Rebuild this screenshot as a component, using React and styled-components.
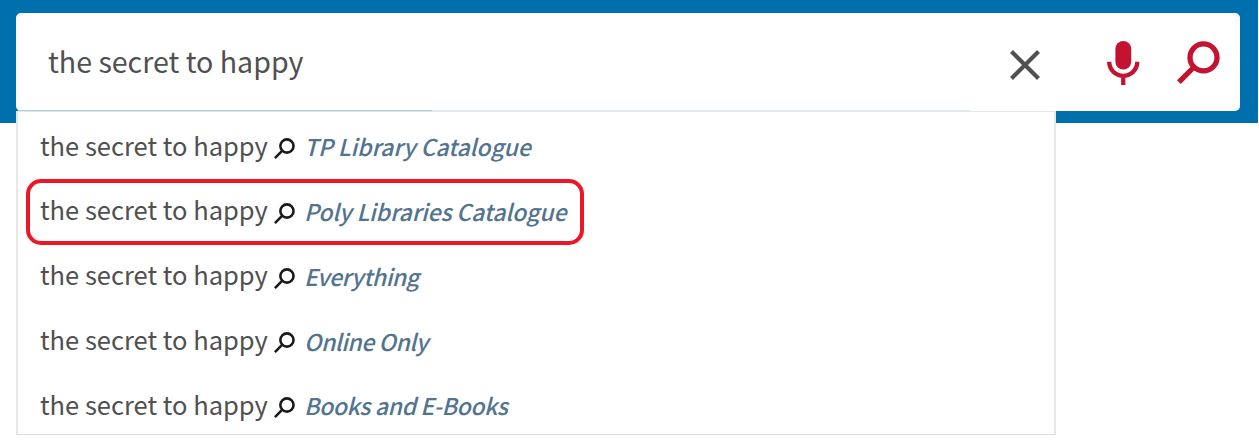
import React from "react";
import styled, { createGlobalStyle } from "styled-components";

const Global = createGlobalStyle`
  * { box-sizing: border-box; }
  body { margin: 0; background: #fff; font-family: "Noto Sans CJK SC", "Noto Sans", sans-serif; color: #505050; }
`;

const Page = styled.main`
  position: relative;
  width: 1259px;
  height: 448px;
  overflow: hidden;
`;

const Banner = styled.header`
  width: 1258px;
  height: 123px;
  padding: 13px 18px 12px 16px;
  background: #006fae;
`;

const SearchBar = styled.div`
  display: flex;
  align-items: center;
  height: 98px;
  padding: 0 20px 0 32px;
  background: #fff;
  border-radius: 5px;
`;

const Query = styled.span`
  flex: 1;
  padding-bottom: 3px;
  font-size: 28.6px;
  line-height: 40px;
  white-space: nowrap;
`;

const IconButton = styled.button`
  display: flex;
  margin: 0 0 0 ${(p) => p.$gap}px;
  padding: ${(p) => p.$drop || 0}px 0 0;
  border: 0;
  background: none;
  color: ${(p) => p.$color};
`;

const Suggestions = styled.ul`
  position: absolute;
  top: 111px;
  left: 16px;
  width: 1040px;
  height: 324px;
  margin: 0;
  padding: 3px 8px 0;
  list-style: none;
  background: #fff;
  border: solid #e7e7e7;
  border-width: 1px 2px;
  border-bottom-color: #dedede;
  box-shadow: 0 3px 4px rgba(0, 0, 0, 0.015);

  &::before {
    content: "";
    position: absolute;
    top: -2px;
    left: 0;
    width: 952px;
    height: 1px;
    background: linear-gradient(to right, #a9cde0 414px, #d9e9f2 414px);
  }
`;

const Row = styled.li`
  position: relative;
  display: flex;
  align-items: center;
  height: 64.75px;
  padding-left: 14px;
`;

const Highlight = styled.span`
  position: absolute;
  top: -1px;
  left: 0;
  width: 558px;
  height: 66px;
  border: 4px solid #ec1627;
  border-radius: 15px;
`;

const Term = styled.span`
  width: 233.5px;
  padding-bottom: 5.6px;
  font-size: 25.5px;
  line-height: 36px;
  white-space: nowrap;
`;

const ScopeIcon = styled.span`
  display: flex;
  padding-top: 2.6px;
  color: #1a1a1a;
`;

const Scope = styled.em`
  margin-left: 9.5px;
  padding-bottom: 2px;
  font-size: 23px;
  line-height: 34px;
  font-weight: 500;
  letter-spacing: ${(p) => p.$tracking}px;
  color: #53748f;
  white-space: nowrap;
`;

const Glass = ({ size, stroke = 5.3 }) => (
  <svg width={size} height={size} viewBox="0 0 43 43" fill="none" stroke="currentColor" strokeWidth={stroke}>
    <circle cx="26.5" cy="16.4" r="13.5" />
    <path d="M17 26 1.9 41.1" />
  </svg>
);

const Cross = () => (
  <svg width="30" height="30" viewBox="0 0 30 30" fill="none" stroke="currentColor" strokeWidth="4.2">
    <path d="M1.5 1.5 28.5 28.5M28.5 1.5 1.5 28.5" />
  </svg>
);

const Mic = () => (
  <svg width="33" height="44" viewBox="0 0 33 44">
    <rect x="8.4" y="0" width="15.8" height="28.6" rx="7.9" fill="currentColor" />
    <path d="M2.2 20.8a14.05 14.05 0 0 0 28.1 0M16.25 34.8V44" fill="none" stroke="currentColor" strokeWidth="4.3" />
  </svg>
);

const scopes = [
  { label: "TP Library Catalogue", tracking: -0.1 },
  { label: "Poly Libraries Catalogue", tracking: -0.12, highlighted: true },
  { label: "Everything", tracking: -0.45 },
  { label: "Online Only", tracking: -0.45 },
  { label: "Books and E-Books", tracking: -0.4 },
];

export default function App() {
  const query = "the secret to happy";
  return (
    <Page>
      <Global />
      <Banner>
        <SearchBar>
          <Query>{query}</Query>
          <IconButton $color="#505050" $gap={0} $drop={6} aria-label="Clear"><Cross /></IconButton>
          <IconButton $color="#c41230" $gap={67} $drop={2} aria-label="Search by voice"><Mic /></IconButton>
          <IconButton $color="#c41230" $gap={37} $drop={1} aria-label="Search"><Glass size={43} /></IconButton>
        </SearchBar>
      </Banner>
      <Suggestions>
        {scopes.map(({ label, tracking, highlighted }) => (
          <Row key={label}>
            <Term>{query}</Term>
            <ScopeIcon><Glass size={21} /></ScopeIcon>
            <Scope $tracking={tracking}>{label}</Scope>
            {highlighted && <Highlight />}
          </Row>
        ))}
      </Suggestions>
    </Page>
  );
}
